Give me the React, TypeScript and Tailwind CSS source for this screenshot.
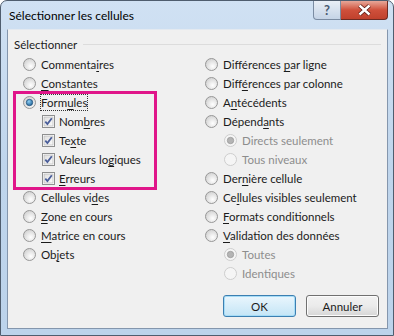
import React from "react";

const font = { fontFamily: 'Lato, "Noto Sans", sans-serif' };

// "&" marks the access key letter
const Label = ({ text }: { text: string }) => {
  const i = text.indexOf("&");
  if (i < 0) return <>{text}</>;
  return (
    <>
      {text.slice(0, i)}
      <span className="underline underline-offset-2">{text[i + 1]}</span>
      {text.slice(i + 2)}
    </>
  );
};

const Radio = ({ checked = false, disabled = false }: { checked?: boolean; disabled?: boolean }) => (
  <svg width="13" height="13" viewBox="0 0 13 13" className="shrink-0">
    <defs>
      <radialGradient id="rf" cx="0.6" cy="0.65" r="0.6">
        <stop offset="0" stopColor="#ffffff" />
        <stop offset="1" stopColor="#d6d6d6" />
      </radialGradient>
      <radialGradient id="rd" cx="0.4" cy="0.35" r="0.7">
        <stop offset="0" stopColor="#8fd0f6" />
        <stop offset="1" stopColor="#1d5f94" />
      </radialGradient>
    </defs>
    <circle
      cx="6.5"
      cy="6.5"
      r="6"
      fill={disabled ? "#f5f5f5" : "url(#rf)"}
      stroke={disabled ? "#cdcdcd" : "#979797"}
    />
    {checked && (
      <circle
        cx="6.5"
        cy="6.5"
        r="3.2"
        fill={disabled ? "#b4b4b4" : "url(#rd)"}
        stroke={disabled ? "#9a9a9a" : "#25557f"}
        strokeWidth="0.8"
      />
    )}
  </svg>
);

const Check = () => (
  <svg width="13" height="13" viewBox="0 0 13 13" className="shrink-0">
    <defs>
      <linearGradient id="cb" x1="0" y1="0" x2="1" y2="1">
        <stop offset="0" stopColor="#dedede" />
        <stop offset="1" stopColor="#fbfbfb" />
      </linearGradient>
    </defs>
    <rect x="0.5" y="0.5" width="12" height="12" fill="#fff" stroke="#8e8f8f" />
    <rect x="2" y="2" width="9" height="9" fill="url(#cb)" stroke="#b0b0b0" strokeWidth="0.6" />
    <path d="M3.3 6.6 L5.4 9 L9.8 3.2" fill="none" stroke="#4a5e9a" strokeWidth="1.8" />
  </svg>
);

type Item = { label: string; kind?: "radio" | "check"; checked?: boolean; disabled?: boolean; indent?: boolean; focus?: boolean };

const Row = ({ label, kind = "radio", checked, disabled, indent, focus }: Item) => (
  <div className={`flex h-[19px] items-center ${indent ? "pl-[19px]" : ""} ${kind === "check" ? "gap-[4px]" : "gap-[5px]"}`}>
    {kind === "radio" ? <Radio checked={checked} disabled={disabled} /> : <Check />}
    <span
      className={`whitespace-nowrap leading-[15px] ${disabled ? "text-[#8d8d8d]" : "text-[#1b1b1b]"} ${
        focus ? "outline outline-1 outline-dotted outline-[#333]" : ""
      }`}
    >
      <Label text={label} />
    </span>
  </div>
);

const left1: Item[] = [{ label: "Commenta&ires" }, { label: "&Constantes" }];
const boxed: Item[] = [
  { label: "Form&ules", checked: true, focus: true },
  { label: "Nom&bres", kind: "check", indent: true },
  { label: "Te&xte", kind: "check", indent: true },
  { label: "Valeurs lo&giques", kind: "check", indent: true },
  { label: "&Erreurs", kind: "check", indent: true },
];
const left2: Item[] = [
  { label: "Cellules vi&des" },
  { label: "&Zone en cours" },
  { label: "&Matrice en cours" },
  { label: "Ob&jets" },
];
const right: Item[] = [
  { label: "Différences &par ligne" },
  { label: "Diff&érences par colonne" },
  { label: "A&ntécédents" },
  { label: "Dépend&ants" },
  { label: "Directs seulement", checked: true, disabled: true, indent: true },
  { label: "Tous niveaux", disabled: true, indent: true },
  { label: "Der&nière cellule" },
  { label: "Ce&llules visibles seulement" },
  { label: "&Formats conditionnels" },
  { label: "&Validation des données" },
  { label: "Toutes", checked: true, disabled: true, indent: true },
  { label: "Identiques", disabled: true, indent: true },
];

export default function App() {
  return (
    <div className="w-[394px] h-[336px] bg-white text-[11.5px]" style={font}>
      <div className="flex h-full w-full flex-col rounded-t-[7px] border border-[#4f5d6e] bg-gradient-to-b from-[#d0e1f3] via-[#bfd5ec] to-[#bcd3eb]">
        <div className="flex h-[28px] shrink-0 items-start">
          <div className="pl-[8px] pt-[6px] text-[12px] text-black">Sélectionner les cellules</div>
          <div className="ml-auto mr-[5px] flex">
            <div className="flex h-[19px] w-[28px] items-center justify-center rounded-bl-[4px] border border-t-0 border-[#7b8ca2] bg-gradient-to-b from-[#e9eff6] to-[#c5d4e6] text-[13px] font-bold leading-none text-[#4a5a70]">
              ?
            </div>
            <div className="flex h-[19px] w-[47px] items-center justify-center rounded-br-[4px] border border-l-0 border-t-0 border-[#6d2b23] bg-gradient-to-b from-[#e6a799] via-[#cf503b] to-[#c0412d]">
              <svg width="15" height="12" viewBox="0 0 15 12">
                <path d="M2.5 1.5 L12.5 10.5 M12.5 1.5 L2.5 10.5" stroke="#5a1a12" strokeWidth="4" />
                <path d="M2.5 1.5 L12.5 10.5 M12.5 1.5 L2.5 10.5" stroke="#ffffff" strokeWidth="2.4" />
              </svg>
            </div>
          </div>
        </div>
        <div className="ml-[6px] mr-[5px] h-[300px] shrink-0 border border-[#8496ad] border-t-[#e3e9f0] bg-[#f0f0f0]">
          <div className="flex items-center gap-[6px] pl-[6px] pr-[6px] pt-[6px]">
            <span className="text-[#1b1b1b]">Sélectionner</span>
            <div className="h-px flex-1 border-t border-[#dcdcdc]" />
          </div>
          <div className="mt-[2px] flex pl-[5px]">
            <div className="w-[192px]">
              <div className="pl-[10px]">
                {left1.map((it) => (
                  <Row key={it.label} {...it} />
                ))}
              </div>
              <div className="-my-[2px] w-[144px] border-[3px] border-[#e0168a] pl-[7px]">
                <div className="-my-[1px]">
                  {boxed.map((it) => (
                    <Row key={it.label} {...it} />
                  ))}
                </div>
              </div>
              <div className="pl-[10px]">
                {left2.map((it) => (
                  <Row key={it.label} {...it} />
                ))}
              </div>
            </div>
            <div>
              {right.map((it) => (
                <Row key={it.label} {...it} />
              ))}
            </div>
          </div>
          <div className="mt-[12px] flex justify-end gap-[10px] pr-[8px]">
            <button className="h-[22px] w-[73px] rounded-[3px] border border-[#3c7fb1] bg-gradient-to-b from-[#eaf6fd] to-[#c4e5f6] text-[#1b1b1b] shadow-[inset_0_0_0_1px_#a6dcf7]">
              OK
            </button>
            <button className="h-[22px] w-[73px] rounded-[3px] border border-[#707070] bg-gradient-to-b from-[#f2f2f2] via-[#ebebeb] to-[#d6d6d6] text-[#1b1b1b] shadow-[inset_0_0_0_1px_#fcfcfc]">
              Annuler
            </button>
          </div>
        </div>
      </div>
    </div>
  );
}
